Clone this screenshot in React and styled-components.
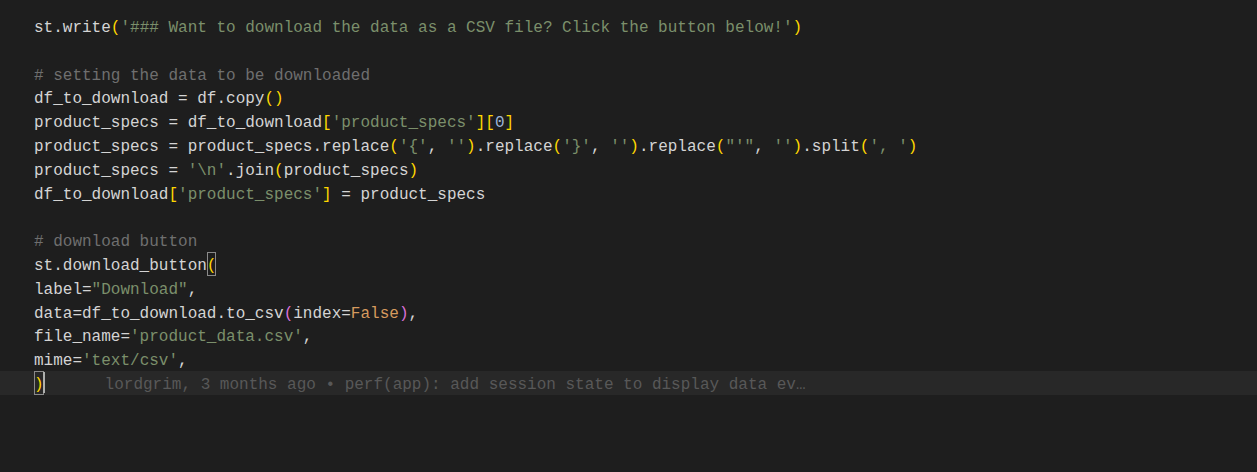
import React from "react";
import styled, { createGlobalStyle } from "styled-components";

const Global = createGlobalStyle`
  html, body { margin: 0; padding: 0; background: #1e1e1e; }
  body { width: 1257px; height: 472px; overflow: hidden; }
`;

const Editor = styled.div`
  background: #1e1e1e;
  width: 1257px;
  height: 472px;
  padding-top: 14px;
  box-sizing: border-box;
  font-family: "Liberation Mono", "DejaVu Sans Mono", monospace;
  font-size: 16px;
  color: #d4d4d4;
`;

const Line = styled.div`
  height: 23.8px;
  padding-left: 34px;
  white-space: pre;
  display: flex;
  align-items: stretch;
  background: ${(p) => (p.$current ? "#282828" : "transparent")};
`;

const colors = {
  plain: "#d4d4d4",
  str: "#7b8f6b",
  com: "#6f6f6f",
  b1: "#ffd700",
  b2: "#da70d6",
  num: "#9db4d8",
  kw: "#d69a5e",
};

const Tok = styled.span`
  display: block;
  color: ${(p) => colors[p.$k]};
  box-sizing: border-box;
  height: 23.8px;
  padding-top: 3px;
  line-height: 23.8px;
  ${(p) => (p.$match ? "outline: 1px solid #8a8a8a; outline-offset: -1px;" : "")}
`;

const Caret = styled.span`
  display: block;
  align-self: center;
  width: 2px;
  height: 21px;
  background: #aeafad;
  margin-left: -1px;
`;

const Blame = styled(Tok)`
  color: #585858;
  margin-left: 60px;
`;

const lines = [
  [["plain", "st.write"], ["b1", "("], ["str", "'### Want to download the data as a CSV file? Click the button below!'"], ["b1", ")"]],
  [],
  [["com", "# setting the data to be downloaded"]],
  [["plain", "df_to_download = df.copy"], ["b1", "()"]],
  [["plain", "product_specs = df_to_download"], ["b1", "["], ["str", "'product_specs'"], ["b1", "]["], ["num", "0"], ["b1", "]"]],
  [
    ["plain", "product_specs = product_specs.replace"], ["b1", "("], ["str", "'{'"], ["plain", ", "], ["str", "''"], ["b1", ")"],
    ["plain", ".replace"], ["b1", "("], ["str", "'}'"], ["plain", ", "], ["str", "''"], ["b1", ")"],
    ["plain", ".replace"], ["b1", "("], ["str", "\"'\""], ["plain", ", "], ["str", "''"], ["b1", ")"],
    ["plain", ".split"], ["b1", "("], ["str", "', '"], ["b1", ")"],
  ],
  [["plain", "product_specs = "], ["str", "'\\n'"], ["plain", ".join"], ["b1", "("], ["plain", "product_specs"], ["b1", ")"]],
  [["plain", "df_to_download"], ["b1", "["], ["str", "'product_specs'"], ["b1", "]"], ["plain", " = product_specs"]],
  [],
  [["com", "# download button"]],
  [["plain", "st.download_button"], ["b1", "(", true]],
  [["plain", "label="], ["str", "\"Download\""], ["plain", ","]],
  [["plain", "data=df_to_download.to_csv"], ["b2", "("], ["plain", "index="], ["kw", "False"], ["b2", ")"], ["plain", ","]],
  [["plain", "file_name="], ["str", "'product_data.csv'"], ["plain", ","]],
  [["plain", "mime="], ["str", "'text/csv'"], ["plain", ","]],
];

export default function App() {
  return (
    <>
      <Global />
      <Editor>
        {lines.map((toks, i) => (
          <Line key={i}>
            {toks.map(([k, t, m], j) => (
              <Tok key={j} $k={k} $match={m}>{t}</Tok>
            ))}
          </Line>
        ))}
        <Line $current>
          <Tok $k="b1" $match>)</Tok>
          <Caret />
          <Blame $k="plain">lordgrim, 3 months ago • perf(app): add session state to display data ev…</Blame>
        </Line>
      </Editor>
    </>
  );
}
